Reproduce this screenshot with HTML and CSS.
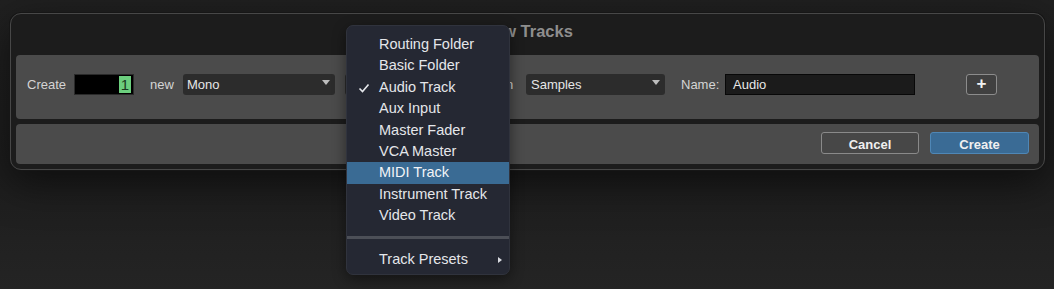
FILE: index.html
```html
<!DOCTYPE html>
<html lang="en">
<head>
  <meta charset="UTF-8">
  <meta name="viewport" content="width=device-width, initial-scale=1.0">
  <link rel="stylesheet" href="styles.css">
</head>
<body>

<div class="screen">

  <div class="dialog">
    <div class="dialog-title">New Tracks</div>

    <div class="panel panel-options">
      <span class="label label-create">Create</span>
      <div class="count-field"><span class="count-value">1</span></div>
      <span class="label label-new">new</span>
      <div class="select select-format">Mono<span class="caret"></span></div>
      <!-- covered by the open popup below -->
      <div class="select select-type"><span class="caret"></span></div>
      <span class="label label-in">in</span>
      <div class="select select-timebase">Samples<span class="caret"></span></div>
      <span class="label label-name">Name:</span>
      <div class="name-field">Audio</div>
      <button class="add-row">+</button>
    </div>

    <div class="panel panel-actions">
      <button class="btn btn-cancel">Cancel</button>
      <button class="btn btn-primary">Create</button>
    </div>
  </div>

  <!-- track type popup, opened over the dialog -->
  <ul class="popup-menu">
    <li>Routing Folder</li>
    <li>Basic Folder</li>
    <li class="checked">
      <svg class="check" width="12" height="10" viewBox="0 0 12 10"><path d="M1.5 5.5 L4.5 8.5 L10.5 1.5" fill="none" stroke="#e6e8ec" stroke-width="1.6"/></svg>
      Audio Track
    </li>
    <li>Aux Input</li>
    <li>Master Fader</li>
    <li>VCA Master</li>
    <li class="active">MIDI Track</li>
    <li>Instrument Track</li>
    <li>Video Track</li>
    <li class="separator"></li>
    <li class="submenu">Track Presets<span class="submenu-arrow"></span></li>
  </ul>

</div>

</body>
</html>
```

FILE: styles.css
```css
body {
  margin: 0;
  font-family: 'Liberation Sans', Arial, sans-serif;
  font-size: 13px;
  color: #d6d6d6;
  background-color: #212121;
}
.screen {
  position: relative;
  width: 1054px;
  height: 289px;
  overflow: hidden;
  padding-top: 13px;
  box-sizing: border-box;
  background: linear-gradient(#202020, #1d1d1d 60%, #242424);
}
.dialog {
  margin-left: 10px;
  width: 1035px;
  height: 157px;
  box-sizing: border-box;
  padding: 0 5px 5px 5px;
  background-color: #1c1c1c;
  border: 1px solid #474747;
  border-radius: 11px;
  box-shadow: 0 0 0 1px #161616, 0 12px 40px rgba(0, 0, 0, 0.55);
  display: flex;
  flex-direction: column;
}
.dialog-title {
  height: 41px;
  line-height: 34px;
  text-align: center;
  font-size: 16.5px;
  font-weight: bold;
  color: #8e8e8e;
}
.panel {
  background-color: #4b4b4b;
  border-radius: 4px;
  display: flex;
  align-items: flex-start;
  box-sizing: border-box;
}
.panel-options {
  height: 65px;
  padding: 19px 0 0 11px;
}
.panel-actions {
  height: 40px;
  margin-top: 5px;
  padding: 8px 10px 0 0;
  justify-content: flex-end;
}
.label {
  line-height: 22px;
  color: #d4d4d4;
  box-sizing: border-box;
}
.label-create {
  width: 47px;
}
.label-new {
  width: 49px;
  padding-left: 16px;
}
.label-in {
  width: 31px;
  padding-left: 8px;
}
.label-name {
  width: 60px;
  padding-left: 16px;
}
.count-field {
  width: 60px;
  height: 21px;
  background-color: #000;
  border: 1px solid #2a2a2a;
  box-sizing: border-box;
  display: flex;
  justify-content: flex-end;
  align-items: center;
  padding-right: 2px;
}
.count-value {
  background-color: #6ccf7e;
  color: #1b3a22;
  font-size: 15px;
  line-height: 17px;
  padding: 0 2px;
}
.select {
  position: relative;
  height: 21px;
  line-height: 22px;
  padding-left: 4px;
  box-sizing: border-box;
  background-color: #2c2c2c;
  border-radius: 3px;
  color: #e6e6e6;
}
.select-format {
  width: 152px;
}
.select-type {
  width: 150px;
  margin-left: 10px;
}
.select-timebase {
  width: 139px;
  padding-left: 5px;
}
.caret {
  position: absolute;
  right: 5px;
  top: 6px;
  width: 0;
  height: 0;
  border-left: 4px solid transparent;
  border-right: 4px solid transparent;
  border-top: 5px solid #bdbdbd;
}
.name-field {
  width: 190px;
  height: 21px;
  line-height: 19px;
  padding-left: 7px;
  box-sizing: border-box;
  background-color: #1b1b1b;
  border: 1px solid #080808;
  color: #e8e8e8;
}
.add-row {
  margin-left: 51px;
  width: 31px;
  height: 21px;
  padding: 0;
  background-color: #404040;
  border: 1.5px solid #8c8c8c;
  border-radius: 3px;
  color: #f2f2f2;
  font-family: inherit;
  font-size: 17px;
  font-weight: bold;
  line-height: 16px;
}
.btn {
  height: 22px;
  padding: 2px 0 0 0;
  border-radius: 3px;
  font-family: inherit;
  font-size: 13px;
  font-weight: bold;
  color: #f0f0f0;
}
.btn-cancel {
  width: 98px;
  background-color: #474747;
  border: 1.5px solid #8a8a8a;
}
.btn-primary {
  width: 99px;
  margin-left: 11px;
  background-color: #3a6b95;
  border: 1.5px solid #4f87b6;
}
.popup-menu {
  position: absolute;
  left: 346px;
  top: 25px;
  width: 164px;
  height: 250px;
  box-sizing: border-box;
  margin: 0;
  padding: 8px 0 5px 0;
  list-style: none;
  background-color: #252833;
  border: 1px solid #30333d;
  border-radius: 7px;
  box-shadow: 0 4px 14px rgba(0, 0, 0, 0.45);
  font-size: 14.5px;
  color: #e4e6ea;
}
.popup-menu li {
  position: relative;
  height: 21.4px;
  line-height: 21.4px;
  padding-left: 32px;
}
.popup-menu li.active {
  background-color: #3a6b94;
  color: #f2f4f7;
}
.popup-menu li.separator {
  height: 3px;
  margin: 9px 0 10px 0;
  padding: 0;
  background-color: #4c4f57;
}
.check {
  position: absolute;
  left: 11px;
  top: 6px;
}
.submenu-arrow {
  position: absolute;
  right: 7px;
  top: 8px;
  width: 0;
  height: 0;
  border-top: 3px solid transparent;
  border-bottom: 3px solid transparent;
  border-left: 4px solid #d8dae0;
}
```
